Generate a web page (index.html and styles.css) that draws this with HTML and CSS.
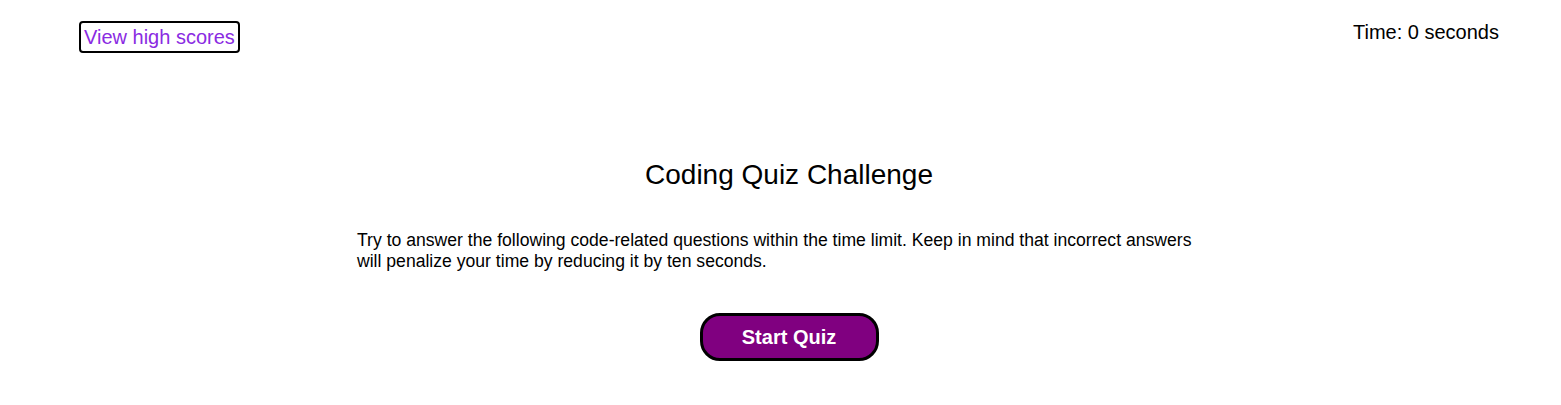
FILE: index.html
```html
<!DOCTYPE html>
<html lang="en">
<head>
<meta charset="utf-8">
<title>Coding Quiz</title>
<link rel="stylesheet" href="styles.css">
</head>
<body>
<header class="top">
  <a class="scores-link" href="#">View high scores</a>
  <div class="timer">Time: 0 seconds</div>
</header>
<main class="quiz">
  <h1 class="title">Coding Quiz Challenge</h1>
  <p class="intro">Try to answer the following code-related questions within the time limit. Keep in mind that incorrect answers will penalize your time by reducing it by ten seconds.</p>
  <div class="actions">
    <button class="start-btn" type="button">Start Quiz</button>
  </div>
</main>
</body>
</html>
```
FILE: styles.css
```css
html, body {
  margin: 0;
  padding: 0;
  background: #ffffff;
  color: #000000;
  font-family: "Liberation Sans", Arial, sans-serif;
}

.top {
  display: flex;
  justify-content: space-between;
  align-items: flex-start;
  padding: 21px 62px 0 79px;
}

.scores-link {
  display: inline-block;
  font-size: 20px;
  line-height: 28px;
  color: #8a2be2;
  text-decoration: none;
  border: 2px solid #000;
  border-radius: 4px;
  padding: 0 3px;
}

.timer {
  font-size: 20px;
  line-height: 22px;
}

.quiz {
  width: 864px;
  margin: 0 0 0 357px;
  padding-top: 105px;
}

.title {
  margin: 0;
  text-align: center;
  font-size: 28px;
  font-weight: normal;
  line-height: 34px;
}

.intro {
  width: 850px;
  margin: 38px 0 0;
  font-size: 17.6px;
  line-height: 21px;
}

.actions {
  display: flex;
  justify-content: center;
  padding-top: 41px;
}

.start-btn {
  width: 179px;
  height: 48px;
  background: #800080;
  color: #ffffff;
  font-family: "Liberation Sans", Arial, sans-serif;
  font-size: 20px;
  font-weight: bold;
  border: 3px solid #000;
  border-radius: 20px;
  cursor: pointer;
}
```
